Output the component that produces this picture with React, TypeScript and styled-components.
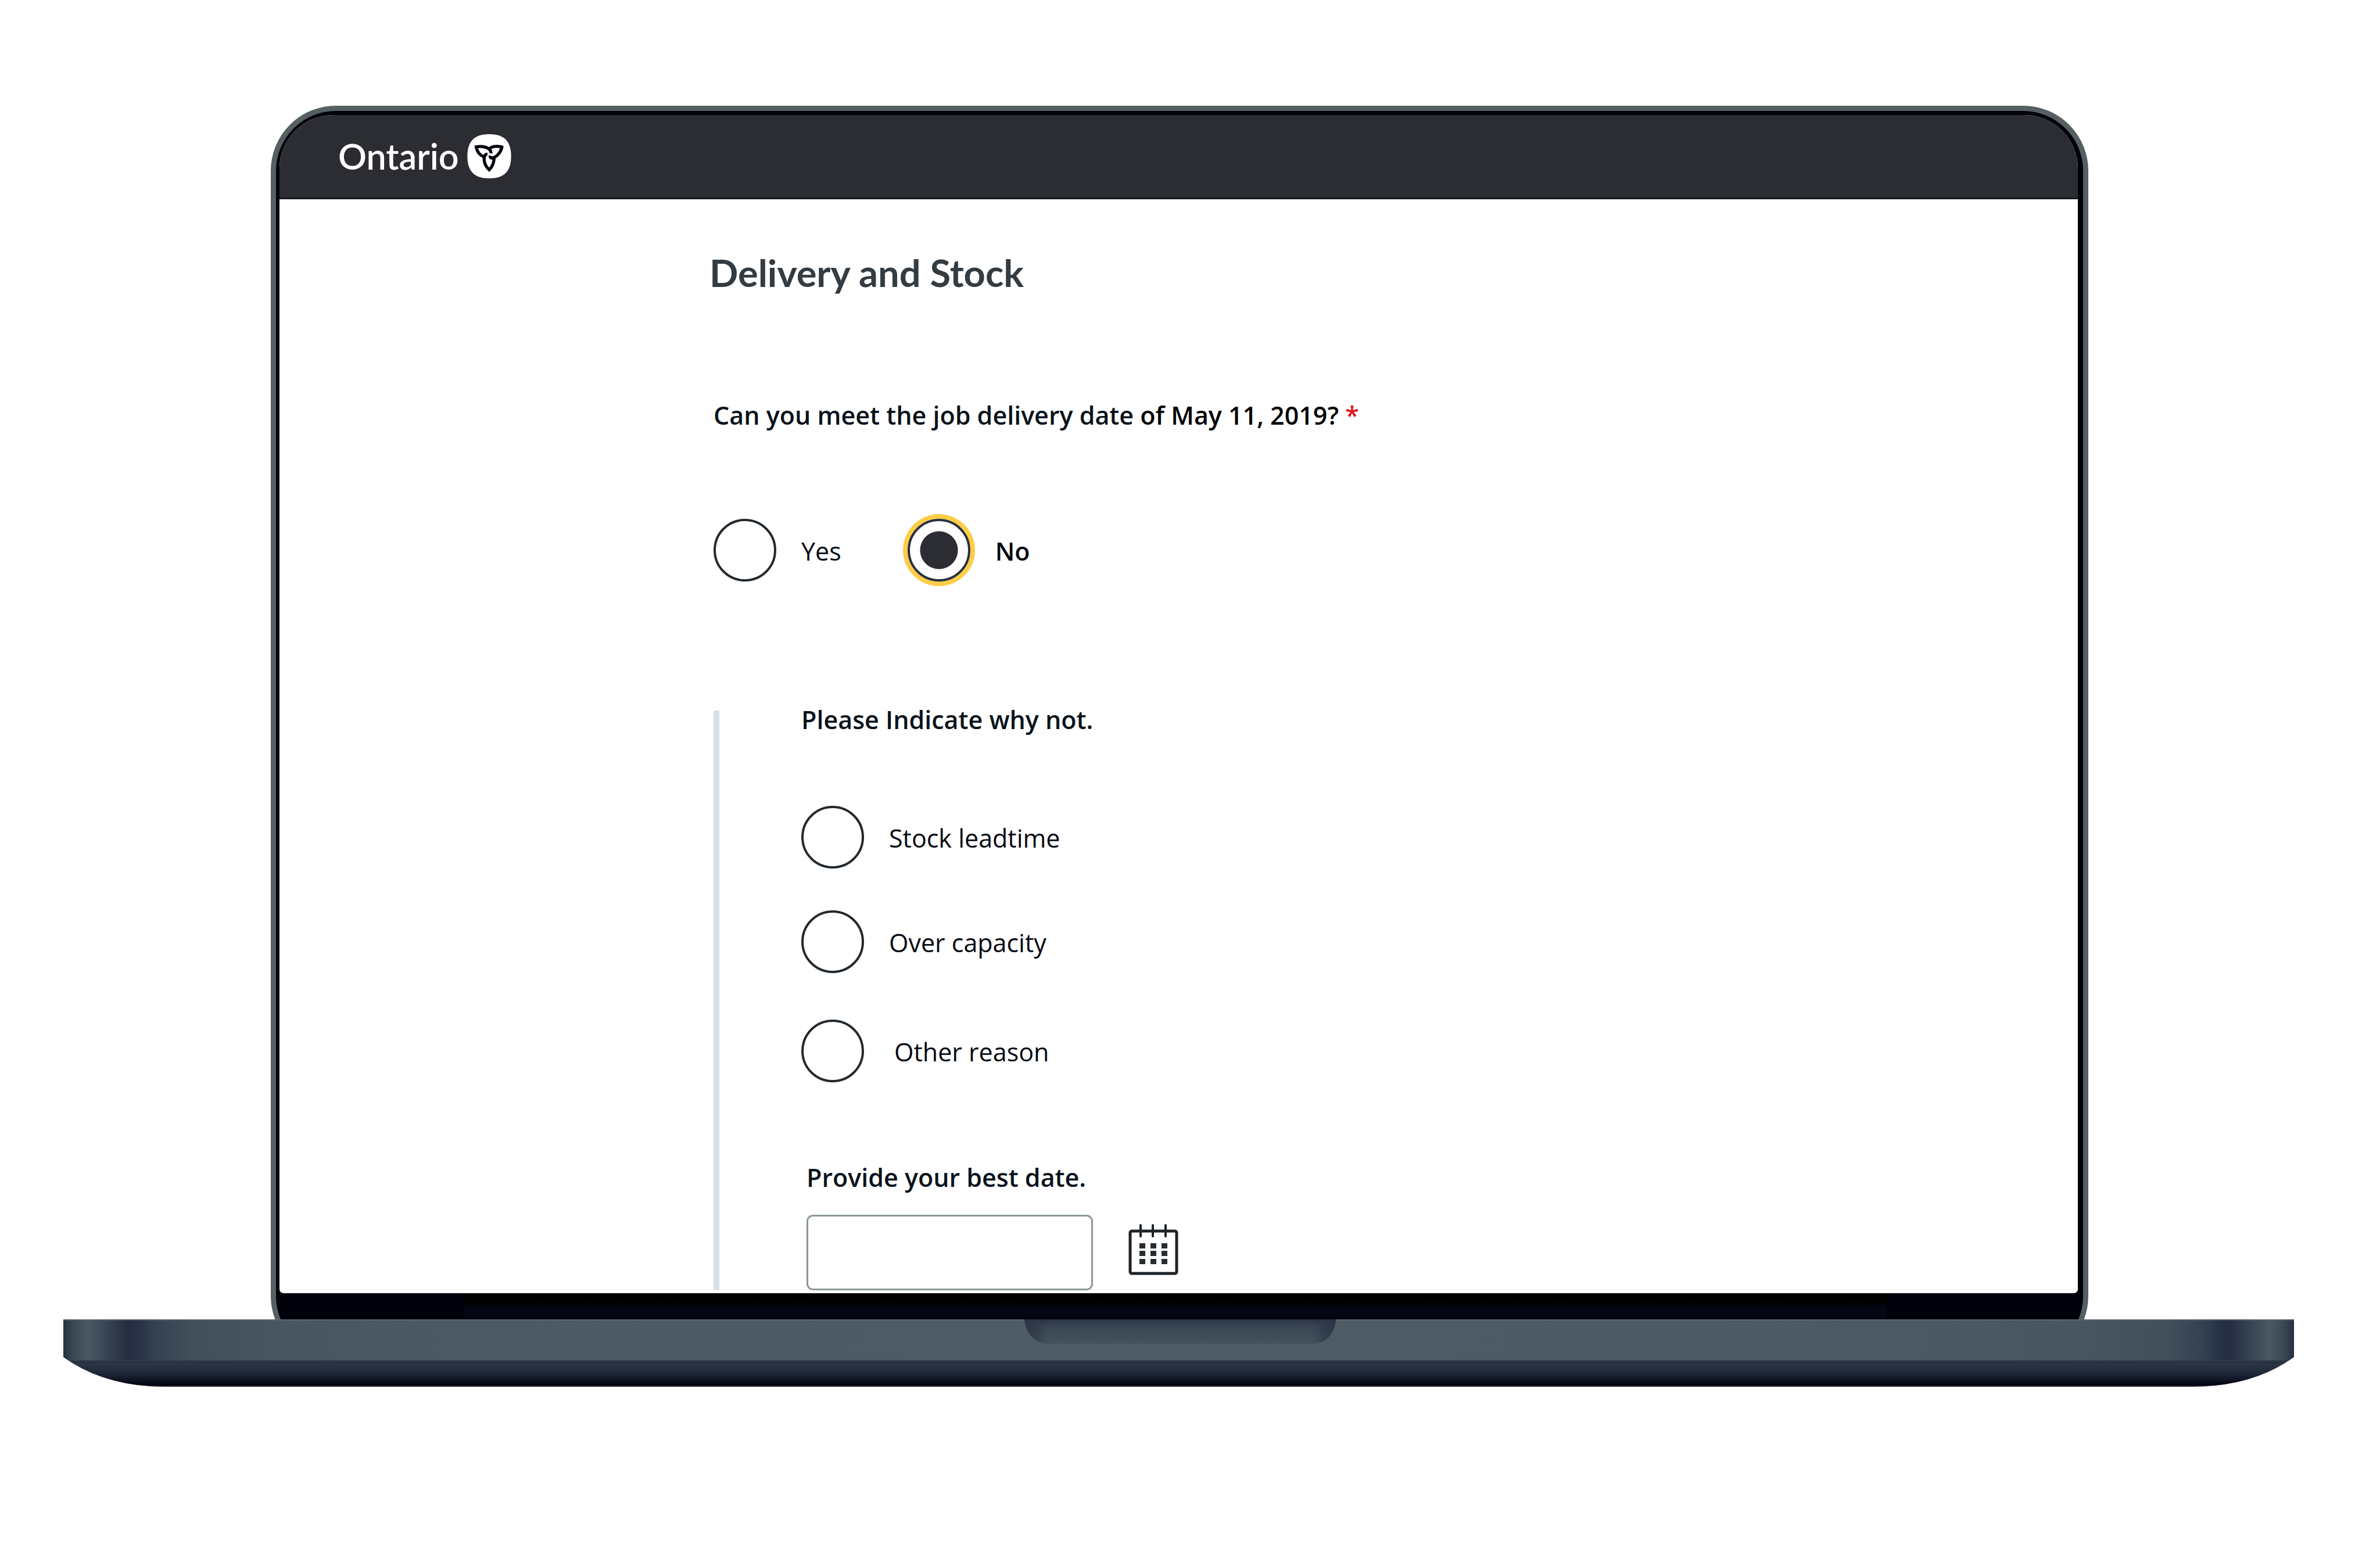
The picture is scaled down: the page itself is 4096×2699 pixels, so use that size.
import React, { useState } from "react";
import styled, { createGlobalStyle, css } from "styled-components";

const GlobalStyle = createGlobalStyle`
  *, *::before, *::after { box-sizing: border-box; }
  body {
    margin: 0;
    background: #ffffff;
    color: #050a12;
    font-family: "Open Sans", "Noto Sans", sans-serif;
    font-size: 43px;
    line-height: 60px;
  }
`;

const Stage = styled.div`
  display: flex;
  flex-direction: column;
  padding: 182px 148px 0 109px;
`;

const Lid = styled.div`
  margin: 0 354px 0 357px;
  padding: 7px 9px 63px 6px;
  border: 9px solid #566062;
  border-radius: 112px;
  background: #00000a;
`;

const Screen = styled.div`
  overflow: hidden;
  border-radius: 92px 92px 7px 7px;
  background: #ffffff;
`;

const Chin = styled.div`
  height: 45px;
  margin: 0 329px 0 318px;
  background: linear-gradient(#000000 0 30%, #060714 60%, #04040e);
`;

const Base = styled.svg`
  display: block;
  width: 100%;
  height: 116px;
  margin-top: -72px;
  position: relative;
`;

const Header = styled.header`
  display: flex;
  align-items: center;
  height: 145px;
  padding: 0 101px;
  background: #2b2d32;
  border-bottom: 3px solid #14161a;
`;

const Brand = styled.a`
  display: flex;
  align-items: center;
  gap: 14px;
  color: #ffffff;
  font-family: Lato, sans-serif;
  font-size: 61px;
  font-weight: 600;
  line-height: 72px;
  text-decoration: none;
`;

const Main = styled.main`
  padding: 86px 100px 5px 740px;
`;

const Title = styled.h1`
  margin: 0 0 176px;
  color: #343c42;
  font-family: Lato, sans-serif;
  font-size: 65px;
  font-weight: 700;
  line-height: 80px;
`;

const Form = styled.form`
  padding-left: 7px;
`;

const Group = styled.fieldset`
  min-width: 0;
  margin: 0;
  padding: 0;
  border: 0;
`;

const Question = styled.legend<{ $tight?: boolean }>`
  margin-bottom: ${(p) => (p.$tight ? 132 : 148)}px;
  padding: 0;
  font-weight: 600;
  line-height: ${(p) => (p.$tight ? 32 : 60)}px;
  color: #0a131b;
`;

const Strong = styled.span`
  color: #000000;
`;

const Required = styled.span`
  color: #e0131e;
`;

const Choices = styled.div<{ $row?: boolean }>`
  display: flex;
  flex-direction: ${(p) => (p.$row ? "row" : "column")};
  align-items: flex-start;
  gap: ${(p) => (p.$row ? 114 : 72)}px;
`;

const Option = styled.label<{ $apart?: boolean; $bold?: boolean }>`
  display: flex;
  align-items: center;
  gap: 43px;
  font-weight: ${(p) => (p.$bold ? 600 : 400)};
  ${(p) =>
    p.$apart &&
    css`
      gap: 52px;
      margin-top: 8px;
    `}
`;

const OptionText = styled.span`
  padding-top: 3px;
`;

const Radio = styled.input`
  appearance: none;
  flex: none;
  width: 108px;
  height: 108px;
  margin: 0;
  border: 4px solid #22292e;
  border-radius: 50%;
  background: #ffffff;

  &:checked {
    border-color: #28303e;
    background: radial-gradient(circle, #2b2d32 32px, #ffffff 33px);
    box-shadow: 0 0 0 8px #fdcd46;
  }
`;

const Details = styled.section`
  margin-top: 222px;
  padding-left: 141px;
  border-left: 10px solid #d7e1e3;
`;

const DateField = styled.div`
  display: flex;
  flex-direction: column;
  gap: 34px;
  margin-top: 134px;
  padding-left: 9px;
`;

const DateLabel = styled.label`
  font-weight: 600;
  color: #0a131b;
`;

const DateRow = styled.div`
  display: flex;
  align-items: center;
  gap: 61px;
`;

const DateInput = styled.input`
  width: 493px;
  height: 130px;
  padding: 0 24px;
  border: 3px solid #8a9799;
  border-radius: 11px;
  background: #ffffff;
  color: inherit;
  font: inherit;
`;

const CalendarButton = styled.button`
  display: flex;
  padding: 0 0 10px;
  border: 0;
  background: none;
`;

function Trillium() {
  return (
    <svg width="76" height="76" viewBox="0 0 388 392" aria-hidden="true">
      <path
        d="M194 0C326 0 388 62 388 196S326 392 194 392 0 330 0 196 62 0 194 0Z"
        fill="#fff"
      />
      <g fill="none" stroke="#04040c" strokeWidth="27">
        <path d="M209 170C212 138 172 98 78 112C84 152 106 182 144 200" />
        <path d="M193 128C222 108 260 102 306 114C298 160 262 202 218 212C205 212 200 204 202 190" />
        <path d="M178 178C150 176 146 212 150 238C154 272 172 296 194 316C218 292 236 260 238 208" />
      </g>
    </svg>
  );
}

function Calendar() {
  const cells = [19, 38, 57];
  const rows = [33, 46, 60];
  return (
    <svg width="86" height="88" viewBox="0 0 86 88" aria-hidden="true">
      <rect x="3" y="12" width="80" height="73" rx="3" fill="none" stroke="#1d2327" strokeWidth="5" />
      {[21, 42, 64].map((x) => (
        <path key={x} d={`M${x} 2V21`} stroke="#1d2327" strokeWidth="4" strokeLinecap="round" />
      ))}
      {rows.map((y) =>
        cells.map((x) => <rect key={`${x}-${y}`} x={x} y={y} width="10" height="9" fill="#262c30" />)
      )}
    </svg>
  );
}

const metal: [number, string][] = [
  [0, "#25303e"],
  [0.4, "#384654"],
  [1.1, "#4c5963"],
  [2, "#354353"],
  [2.9, "#242d40"],
  [3.4, "#28324a"],
  [4.1, "#344251"],
  [5.8, "#41505c"],
  [9.6, "#485660"],
  [17, "#4b5963"],
];

function LaptopBase() {
  const stops = [
    ...metal,
    [50, "#4e5c66"] as [number, string],
    ...metal.map(([at, c]) => [100 - at, c] as [number, string]).reverse(),
  ];
  return (
    <Base viewBox="0 0 3839 116" preserveAspectRatio="none" aria-hidden="true">
      <defs>
        <linearGradient id="metal">
          {stops.map(([at, c]) => (
            <stop key={at} offset={`${at}%`} stopColor={c} />
          ))}
        </linearGradient>
        <linearGradient id="under" x2="0" y2="1">
          <stop offset="0" stopColor="#33404e" />
          <stop offset="0.08" stopColor="#253040" />
          <stop offset="0.16" stopColor="#2b3546" />
          <stop offset="0.45" stopColor="#202938" />
          <stop offset="0.7" stopColor="#131828" />
          <stop offset="0.93" stopColor="#020210" />
          <stop offset="1" stopColor="#2a2f3c" />
        </linearGradient>
        <linearGradient id="notch" x2="0" y2="1">
          <stop offset="0" stopColor="#2b3445" />
          <stop offset="0.3" stopColor="#394653" />
          <stop offset="1" stopColor="#45535e" />
        </linearGradient>
        <linearGradient id="notchSides">
          <stop offset="0" stopColor="#2b3445" />
          <stop offset="0.08" stopColor="#2b3445" stopOpacity="0" />
          <stop offset="0.92" stopColor="#2b3445" stopOpacity="0" />
          <stop offset="1" stopColor="#2b3445" />
        </linearGradient>
        <clipPath id="hull">
          <path d="M0 0H3839V65Q3768 116 3664 116H175Q71 116 0 65Z" />
        </clipPath>
      </defs>
      <g clipPath="url(#hull)">
        <rect width="3839" height="71" fill="url(#metal)" />
        <rect y="70" width="3839" height="46" fill="url(#under)" />
        <rect width="3839" height="2" fill="#6b767d" opacity="0.5" />
      </g>
      {["notch", "notchSides"].map((id) => (
        <path key={id} d="M1654 0H2190C2188 26 2172 42 2150 42H1696C1674 42 1656 26 1654 0Z" fill={`url(#${id})`} />
      ))}
    </Base>
  );
}

const reasons = ["Stock leadtime", "Over capacity", "Other reason"];

export default function App() {
  const [canMeet, setCanMeet] = useState("No");
  const [reason, setReason] = useState("");

  return (
    <>
      <GlobalStyle />
      <Stage>
        <Lid>
          <Screen>
            <Header>
              <Brand href="#">
                Ontario
                <Trillium />
              </Brand>
            </Header>
            <Main>
              <Title>Delivery and Stock</Title>
              <Form>
                <Group>
                  <Question>
                    Can you meet the job delivery date <Strong>of May 11, 2019?</Strong> <Required>*</Required>
                  </Question>
                  <Choices $row>
                    {["Yes", "No"].map((value) => (
                      <Option key={value} $bold={canMeet === value}>
                        <Radio
                          type="radio"
                          name="canMeet"
                          value={value}
                          checked={canMeet === value}
                          onChange={() => setCanMeet(value)}
                        />
                        <OptionText>{value}</OptionText>
                      </Option>
                    ))}
                  </Choices>
                </Group>
                <Details>
                  <Group>
                    <Question $tight>Please Indicate why not.</Question>
                    <Choices>
                      {reasons.map((value) => (
                        <Option key={value} $apart={value === "Other reason"}>
                          <Radio
                            type="radio"
                            name="reason"
                            value={value}
                            checked={reason === value}
                            onChange={() => setReason(value)}
                          />
                          <OptionText>{value}</OptionText>
                        </Option>
                      ))}
                    </Choices>
                  </Group>
                  <DateField>
                    <DateLabel htmlFor="bestDate">Provide your best date.</DateLabel>
                    <DateRow>
                      <DateInput id="bestDate" type="text" />
                      <CalendarButton type="button" aria-label="Open calendar">
                        <Calendar />
                      </CalendarButton>
                    </DateRow>
                  </DateField>
                </Details>
              </Form>
            </Main>
          </Screen>
          <Chin />
        </Lid>
        <LaptopBase />
      </Stage>
    </>
  );
}
